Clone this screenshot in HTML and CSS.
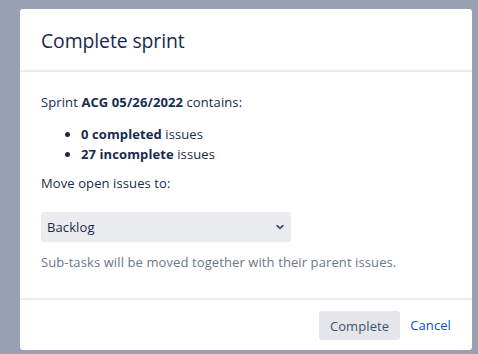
FILE: index.html
```html
<!DOCTYPE html>
<html lang="en">
<head>
    <meta charset="UTF-8" />
    <title>Complete sprint</title>
    <link rel="stylesheet" href="styles.css">
</head>
<body>
    <div class="modal">
        <div class="modal-header">
            <h2>Complete sprint</h2>
        </div>
        <div class="modal-body">
            <p>Sprint <strong>ACG 05/26/2022</strong> contains:</p>
            <ul class="issue-list">
                <li><strong>0 completed</strong> issues</li>
                <li><strong>27 incomplete</strong> issues</li>
            </ul>
            <p>Move open issues to:</p>
            <div class="select">
                <span>Backlog</span>
                <svg width="10" height="10" viewBox="0 0 10 10">
                    <path d="M2.2 3.6 L5 6.3 L7.8 3.6" fill="none" stroke="#42526e" stroke-width="1.8" stroke-linecap="round" stroke-linejoin="round"/>
                </svg>
            </div>
            <p class="hint">Sub-tasks will be moved together with their parent issues.</p>
        </div>
        <div class="modal-footer">
            <button class="btn-complete">Complete</button>
            <a href="#" class="btn-cancel">Cancel</a>
        </div>
    </div>
</body>
</html>
```

FILE: styles.css
```css
* {
    box-sizing: border-box;
    margin: 0;
    padding: 0;
}

body {
    font-family: 'Open Sans', 'Noto Sans', sans-serif;
    background: #98a1b2;
    color: #172b4d;
    padding: 9px 6px 0 20px;
    height: 354px;
    overflow: hidden;
}

.modal {
    background: #ffffff;
    border-radius: 3px;
    width: 452px;
    height: 341px;
    display: flex;
    flex-direction: column;
}

.modal-header {
    padding: 20px 21px 17px;
    border-bottom: 2px solid #ebecf0;
}

h2 {
    font-size: 19.4px;
    font-weight: 500;
    line-height: 24px;
    letter-spacing: -0.1px;
}

.modal-body {
    padding: 20px 21px 0;
    font-size: 13px;
    line-height: 20px;
    flex: 1;
    letter-spacing: 0.1px;
}

strong {
    font-weight: 700;
}

.issue-list {
    margin: 12px 0 9px 40px;
}

.select {
    margin-top: 19px;
    width: 250px;
    height: 30px;
    background: #ebecf0;
    border-radius: 3px;
    display: flex;
    align-items: center;
    justify-content: space-between;
    padding: 0 6px 0 6px;
    font-size: 13px;
}

.hint {
    margin-top: 10px;
    color: #6b778c;
}

.modal-footer {
    border-top: 2px solid #ebecf0;
    padding: 11px 21px 0 0;
    height: 52px;
    display: flex;
    justify-content: flex-end;
    align-items: flex-start;
    gap: 10px;
    font-size: 13px;
}

.btn-complete {
    font-family: inherit;
    font-size: 13px;
    color: #42526e;
    background: #e4e6ea;
    border: none;
    border-radius: 3px;
    height: 29px;
    padding: 0 11px;
    letter-spacing: 0.1px;
}

.btn-cancel {
    color: #0052cc;
    text-decoration: none;
    line-height: 29px;
    letter-spacing: 0.1px;
}
```
